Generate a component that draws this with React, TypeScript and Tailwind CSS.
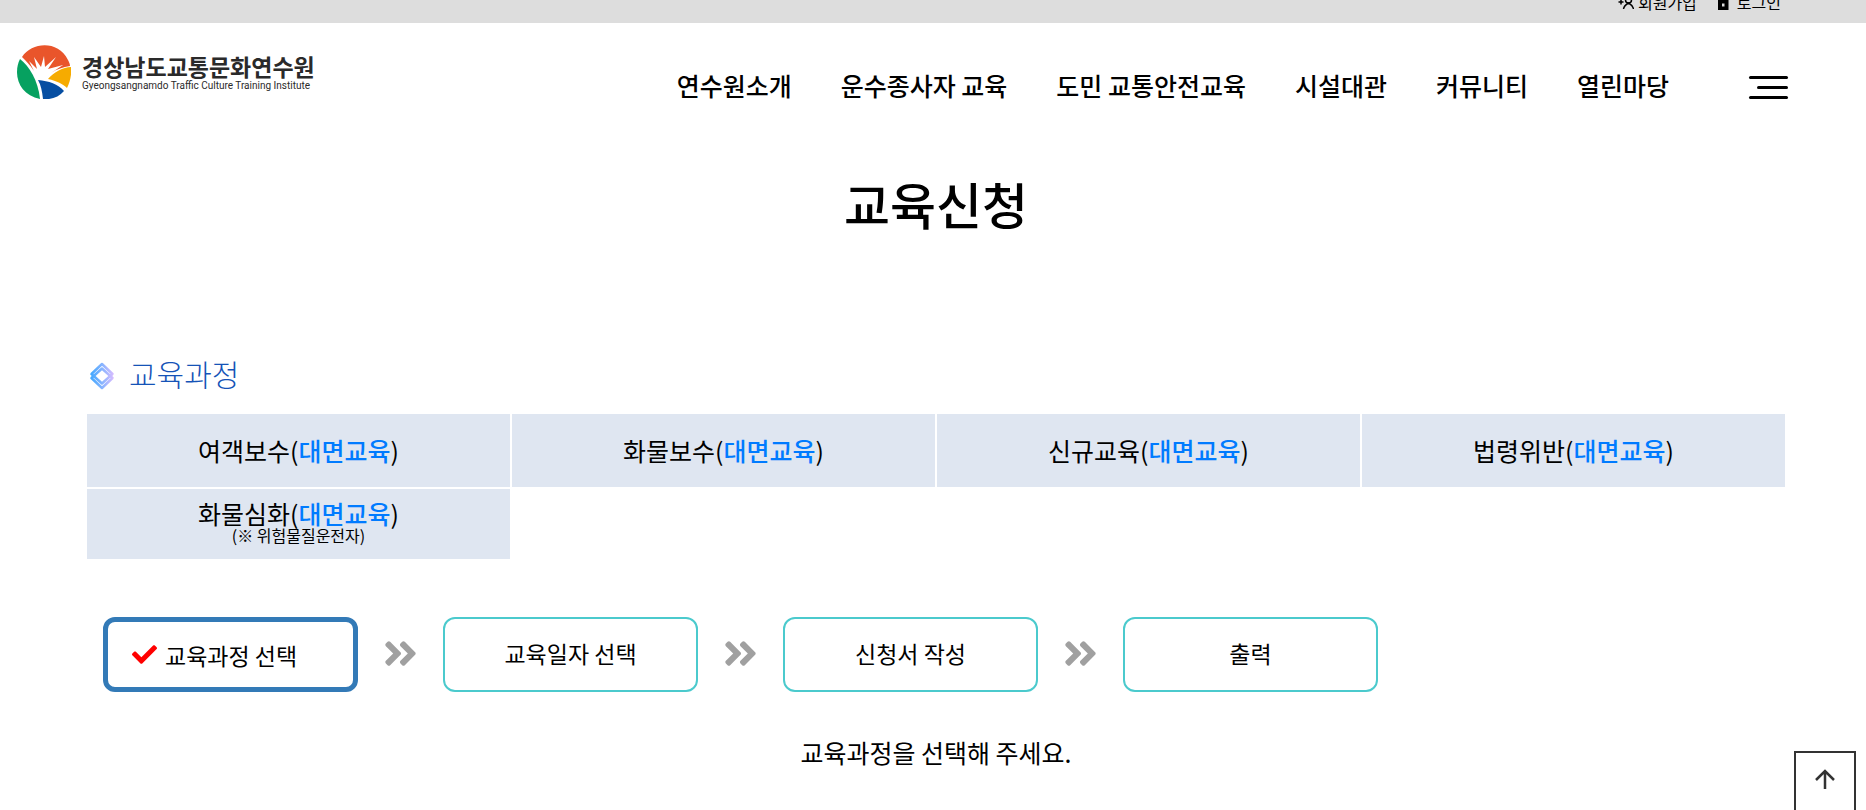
import { FaAngleDoubleRight, FaCheck } from "react-icons/fa";

const menu = ["연수원소개", "운수종사자 교육", "도민 교통안전교육", "시설대관", "커뮤니티", "열린마당"];

const courses: { name: string; note?: string }[] = [
  { name: "여객보수" },
  { name: "화물보수" },
  { name: "신규교육" },
  { name: "법령위반" },
  { name: "화물심화", note: "(※ 위험물질운전자)" },
];

const steps = ["교육과정 선택", "교육일자 선택", "신청서 작성", "출력"];

function LogoMark() {
  return (
    <svg viewBox="0 0 54 54" className="h-[54px] w-[54px] shrink-0" aria-hidden="true">
      <path d="M5 12C15-3 41-5 51 15C52 17 53 19 53 21C46 22 40 24 34 28L46 20L31 24L39 12L28 22L27 11L24 22L17 12L20 24L12 16L17 26C13 20 9 16 5 12Z" fill="#e9552b" />
      <path d="M3 14C12 21 21 35 23 54C8 51 0 40 0 27C0 22 1 18 3 14Z" fill="#06a160" />
      <path d="M54 22C46 22 37 27 31 34C40 36 46 39 50 43C53 37 55 29 54 22Z" fill="#f6ab00" />
      <path d="M21 35C32 36 41 39 47 46C42 52 34 55 26 54C25 46 24 40 21 35Z" fill="#064ea2" />
    </svg>
  );
}

function JoinIcon() {
  return (
    <svg viewBox="0 0 16 16" className="h-4 w-4" fill="none" stroke="currentColor" strokeWidth="1.500" aria-hidden="true">
      <circle cx="10.500" cy="6" r="3" />
      <path d="M3 5.500v5M0.500 8h5M5.500 15c0.500-3 2.500-4.500 5-6c2.500 1.500 4.500 3 5 6" />
    </svg>
  );
}

function LockIcon() {
  return (
    <svg viewBox="0 0 12 16" className="h-4 w-3" aria-hidden="true">
      <path d="M3 7V4a3 3 0 0 1 6 0v3" fill="none" stroke="currentColor" strokeWidth="1.500" />
      <path fillRule="evenodd" d="M1 6h10.500v10H1zM5 9.500v3h2.500v-3z" fill="currentColor" />
    </svg>
  );
}

function DiamondIcon() {
  return (
    <svg viewBox="0 0 26 28" className="mt-1.5 h-7 w-[26px]" fill="none" strokeLinejoin="round" aria-hidden="true">
      <defs>
        <linearGradient id="diamond" x1="0" y1="0" x2="26" y2="0" gradientUnits="userSpaceOnUse">
          <stop offset="0" stopColor="#35a5ff" />
          <stop offset="0.500" stopColor="#86b4ff" />
          <stop offset="1" stopColor="#e2bdff" />
        </linearGradient>
      </defs>
      <path d="M13 2L23.500 12L13 21.500L2.500 12Z" stroke="url(#diamond)" strokeWidth="2.500" />
      <path d="M13 6.500L23.500 16L13 26L2.500 16Z" stroke="url(#diamond)" strokeWidth="2.500" />
    </svg>
  );
}

export default function App() {
  return (
    <div className="h-screen overflow-hidden bg-white font-['Noto_Sans_CJK_KR',sans-serif] text-black">
      <div className="flex h-[23px] items-end justify-end overflow-hidden bg-[#ddd] pr-[85px] pb-[9px]">
        <div className="flex gap-5 text-base leading-6">
          <a href="#join" className="flex items-center gap-1">
            <JoinIcon />
            회원가입
          </a>
          <a href="#login" className="flex items-center gap-2">
            <LockIcon />
            로그인
          </a>
        </div>
      </div>

      <header className="flex h-32 items-start justify-between pr-[78px] pl-[17px]">
        <div className="pt-[22px]">
          <a href="#home" className="flex items-center gap-[11px]">
            <LogoMark />
            <span className="flex flex-col pt-1 whitespace-nowrap text-[#2a2a2a]">
              <span className="text-[23px] leading-6 font-bold">경상남도교통문화연수원</span>
              <span className="font-[Roboto,sans-serif] text-[10px] leading-4">
                Gyeongsangnamdo Traffic Culture Training Institute
              </span>
            </span>
          </a>
        </div>
        <div className="flex items-start pt-11">
          <nav className="flex gap-[49px] text-[25px] leading-9 font-medium whitespace-nowrap">
            {menu.map((item) => (
              <a key={item} href="#menu">{item}</a>
            ))}
          </nav>
          <button type="button" aria-label="전체메뉴" className="mt-[9px] ml-20 flex w-[39px] flex-col items-end gap-[7px]">
            <span className="h-[3px] w-full rounded-sm bg-black" />
            <span className="h-[3px] w-[31px] rounded-sm bg-black" />
            <span className="h-[3px] w-full rounded-sm bg-black" />
          </button>
        </div>
      </header>

      <main className="mr-[81px] ml-[87px]">
        <h1 className="pt-4 text-center text-[50px] leading-[72px] font-medium">교육신청</h1>

        <section className="pt-28">
          <h2 className="flex items-center gap-3.5 pl-0.5 text-[30px] leading-11 font-light text-[#1553b7]">
            <DiamondIcon />
            교육과정
          </h2>
          <div className="mt-[19px] grid grid-cols-4 gap-0.5">
            {courses.map((course) => (
              <button
                key={course.name}
                type="button"
                className="flex min-h-[70px] flex-col items-center justify-center bg-[#dfe6f1] pb-0.5 text-[25px] leading-6 first:min-h-[73px]"
              >
                <span>
                  {course.name}(<span className="font-medium text-[#007bff]">대면교육</span>)
                </span>
                {course.note && <span className="text-base leading-5">{course.note}</span>}
              </button>
            ))}
          </div>
        </section>

        <ol className="mt-[58px] flex items-center pl-4 text-[23px]">
          {steps.map((step, i) => (
            <li key={step} className="flex items-center">
              {i > 0 && (
                <span className="flex w-[85px] justify-center pb-0.5 text-[#a0a0a0]">
                  <FaAngleDoubleRight size={39} />
                </span>
              )}
              {i === 0 ? (
                <span className="flex h-[75px] w-[255px] items-center gap-2 rounded-xl border-5 border-[#337ab7] pl-6">
                  <FaCheck size={25} className="text-[#f00]" />
                  <span className="pt-0.5">{step}</span>
                </span>
              ) : (
                <span className="flex h-[75px] w-[255px] items-center justify-center rounded-xl border-2 border-[#4bcacd] pb-0.5">
                  {step}
                </span>
              )}
            </li>
          ))}
        </ol>

        <p className="mt-[42px] text-center text-[25px] leading-9">교육과정을 선택해 주세요.</p>
      </main>

      <button
        type="button"
        aria-label="맨 위로"
        className="fixed right-2.5 -bottom-[3px] flex h-[62px] w-[62px] items-center justify-center border-2 border-[#333] bg-white pb-1.5 text-[#333]"
      >
        <svg viewBox="0 0 20 20" className="h-5 w-5" fill="none" stroke="currentColor" strokeWidth="2.500" aria-hidden="true">
          <path d="M10 20V2M1 11L10 2L19 11" />
        </svg>
      </button>
    </div>
  );
}
